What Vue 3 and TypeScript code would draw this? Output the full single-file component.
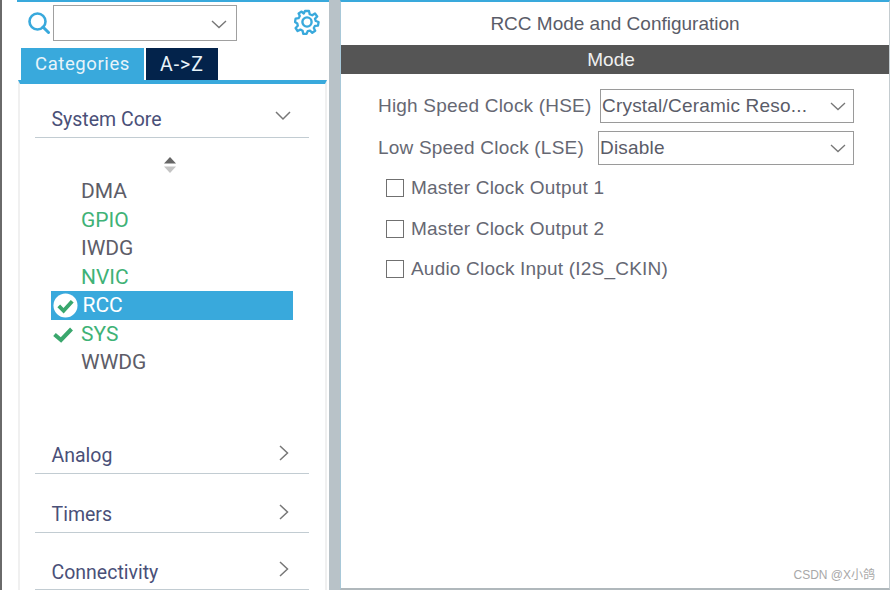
<script setup lang="ts">
const items = [
  { name: 'DMA', state: '' },
  { name: 'GPIO', state: 'green' },
  { name: 'IWDG', state: '' },
  { name: 'NVIC', state: 'green' },
  { name: 'RCC', state: 'selected' },
  { name: 'SYS', state: 'checked' },
  { name: 'WWDG', state: '' },
]
const closedGroups = [
  { name: 'Analog', cls: 'analog' },
  { name: 'Timers', cls: 'timers' },
  { name: 'Connectivity', cls: 'connectivity' },
]
const checks = ['Master Clock Output 1', 'Master Clock Output 2', 'Audio Clock Input (I2S_CKIN)']
</script>

<template>
  <div class="app">
    <div class="edge"></div>
    <aside class="side">
      <div class="search-row">
        <svg class="search-icon" width="22" height="22" viewBox="0 0 22 22" fill="none" stroke="#39a9dc">
          <circle cx="9.5" cy="9.5" r="8" stroke-width="2.6" />
          <path d="M15 15 L20.5 20.5" stroke-width="3" stroke-linecap="round" />
        </svg>
        <div class="combo">
          <svg width="16" height="9" viewBox="0 0 16 9" fill="none" stroke="#777" stroke-width="1.4"><path d="M1 1 L8 7.5 L15 1" /></svg>
        </div>
        <svg class="gear" width="26" height="26" viewBox="0 0 26 26" fill="none" stroke="#39a9dc" stroke-width="2.3" stroke-linejoin="round">
          <path d="M11 2 H15 L15.7 5.2 L18.2 6.3 L21 4.5 L23.2 7.4 L21 9.8 L21.8 12 L24.6 13 L24 16.6 L21 16.8 L19.8 19 L21.2 21.8 L18.3 23.8 L16 21.7 L13.7 22.2 L12.6 24.8 H9.2 L8.6 21.8 L6.4 20.6 L3.6 22 L1.6 19 L3.8 16.8 L3.3 14.4 L1 13 L1.6 9.6 L4.6 9.2 L5.8 7 L4.6 4.4 L7.6 2.6 L9.8 4.6 Z" />
          <circle cx="13" cy="13" r="4.6" stroke-width="2.4" />
        </svg>
      </div>
      <div class="tabs">
        <div class="tab active">Categories</div>
        <div class="tab dark">A-&gt;Z</div>
      </div>
      <div class="panel">
        <div class="group open">
          <span>System Core</span>
          <svg width="16" height="10" viewBox="0 0 16 10" fill="none" stroke="#777" stroke-width="1.5"><path d="M1 1 L8 8 L15 1" /></svg>
        </div>
        <div class="sorter">
          <svg width="14" height="17" viewBox="0 0 14 17">
            <path d="M7 0 L13 6.5 H1 Z" fill="#666" />
            <path d="M7 16 L13 9.5 H1 Z" fill="#c4c4c4" />
          </svg>
        </div>
        <ul class="items">
          <li v-for="item in items" :key="item.name" class="item" :class="item.state">
            <svg v-if="item.state === 'selected'" class="badge" width="25" height="25" viewBox="0 0 26 26">
              <circle cx="13" cy="13" r="12.5" fill="#fff" />
              <path d="M6 13.5 L11 18.5 L20 8.5" fill="none" stroke="#3aa76d" stroke-width="4" />
            </svg>
            <svg v-if="item.state === 'checked'" class="tick" width="20" height="17" viewBox="0 0 20 16">
              <path d="M1.5 8 L8 13.5 L18.5 2.5" fill="none" stroke="#3aa76d" stroke-width="4" />
            </svg>
            <span>{{ item.name }}</span>
          </li>
        </ul>
        <div v-for="g in closedGroups" :key="g.name" class="group closed" :class="g.cls">
          <span>{{ g.name }}</span>
          <svg width="10" height="16" viewBox="0 0 10 16" fill="none" stroke="#777" stroke-width="1.5"><path d="M1 1 L8.5 8 L1 15" /></svg>
        </div>
      </div>
    </aside>
    <div class="gutter"></div>
    <main class="main">
      <h1 class="title">RCC Mode and Configuration</h1>
      <div class="bar">Mode</div>
      <div class="form">
        <div class="field hse">
          <label>High Speed Clock (HSE)</label>
          <div class="select">
            <span>Crystal/Ceramic Reso...</span>
            <svg width="16" height="9" viewBox="0 0 16 9" fill="none" stroke="#777" stroke-width="1.3"><path d="M1 1 L8 7.5 L15 1" /></svg>
          </div>
        </div>
        <div class="field lse">
          <label>Low Speed Clock (LSE)</label>
          <div class="select">
            <span>Disable</span>
            <svg width="16" height="9" viewBox="0 0 16 9" fill="none" stroke="#777" stroke-width="1.3"><path d="M1 1 L8 7.5 L15 1" /></svg>
          </div>
        </div>
        <div class="checks">
          <div v-for="c in checks" :key="c" class="check">
            <span class="box"></span>
            <span>{{ c }}</span>
          </div>
        </div>
      </div>
      <div class="mark">CSDN @X小鸽</div>
    </main>
  </div>
</template>

<style>
html, body { margin: 0; overflow: hidden; background: #fff; }
</style>

<style scoped>
.app {
  width: 890px;
  height: 590px;
  display: flex;
  overflow: hidden;
  background: #fff;
  font-family: Roboto, "Liberation Sans", "Noto Sans CJK SC", sans-serif;
  color: #5c5f6b;
}
.edge {
  width: 2px;
  margin-right: 15px;
  background: #6a6a6a;
  flex: none;
}
.side {
  width: 312px;
  flex: none;
  display: flex;
  flex-direction: column;
  border-top: 2px solid #39a9dc;
  box-sizing: border-box;
}
.search-row {
  height: 44px;
  display: flex;
  align-items: flex-start;
  padding-left: 11px;
  box-sizing: border-box;
}
.search-icon { margin-top: 9.5px; flex: none; }
.combo {
  width: 184px;
  height: 36px;
  margin-left: 3px;
  margin-top: 3px;
  border: 1px solid #a0a0a0;
  box-sizing: border-box;
  display: flex;
  align-items: center;
  justify-content: flex-end;
  padding-right: 9px;
  flex: none;
}
.combo svg { margin-top: 3px; }
.gear { margin-left: 57px; margin-top: 7px; flex: none; }
.tabs {
  display: flex;
  gap: 2px;
  height: 32px;
  margin-top: 2px;
  padding-left: 4px;
}
.tab {
  height: 32px;
  line-height: 33px;
  text-align: center;
  color: #e8f4fa;
  font-size: 18.5px;
  letter-spacing: 0.6px;
}
.active { width: 123px; background: #39a9dc; }
.dark { width: 72px; background: #03234b; font-size: 19.5px; letter-spacing: 1px; }
.panel {
  flex: 1;
  width: 309px;
  margin-left: 1px;
  border-top: 4px solid #39a9dc;
  box-sizing: border-box;
  padding: 0 17px 0 15px;
  border-left: 2px solid #f0f0f0;
  border-right: 2px solid #f0f0f0;
  overflow: hidden;
}
.group {
  height: 30px;
  display: flex;
  justify-content: space-between;
  border-bottom: 1px solid #c2ccd2;
  font-size: 19.5px;
  color: #4a5078;
  padding: 0 17px 0 16.5px;
  box-sizing: content-box;
  width: 240.5px;
}
.group span { line-height: 30px; margin-top: -2px; }
.open { margin-top: 23px; }
.open svg { margin-top: 4px; margin-right: 1px; }
.closed svg { margin-top: 2px; margin-right: 3px; }
.analog { margin-top: 66px; }
.timers { margin-top: 28px; }
.connectivity { margin-top: 26px; }
.connectivity span { margin-top: -1px; }
.sorter {
  display: flex;
  justify-content: center;
  margin-top: 19px;
  height: 17px;
  width: 270px;
}
.items {
  list-style: none;
  margin: 3px 0 0 0;
  padding: 0;
}
.item {
  width: 242px;
  height: 28.5px;
  margin-left: 16px;
  box-sizing: border-box;
  padding-left: 30px;
  font-size: 21px;
  line-height: 28.5px;
  color: #5d5d68;
  position: relative;
}
.green, .checked { color: #3fb277; }
.selected { background: #39a9dc; color: #fff; padding-left: 31.5px; }
.badge { position: absolute; left: 1.5px; top: 2px; }
.tick { position: absolute; left: 2px; top: 6px; }
.gutter { width: 11px; background: #b8c2c8; flex: none; }
.main {
  flex: 1;
  position: relative;
  border-top: 2px solid #39a9dc;
  border-left: 1px solid #a8c8d8;
  border-right: 1px solid #c4ccd0;
  border-bottom: 2px solid #b0b8bc;
  box-sizing: border-box;
}
.title {
  margin: 0;
  height: 43px;
  line-height: 44px;
  text-align: center;
  font-size: 19px;
  font-weight: 400;
  color: #5a5c68;
  font-family: "Liberation Sans", sans-serif;
}
.bar {
  height: 29px;
  line-height: 29px;
  background: #555;
  color: #f0f0f0;
  text-align: center;
  font-size: 19px;
  padding-right: 8px;
  font-family: "Liberation Sans", sans-serif;
}
.form {
  font-family: "Liberation Sans", sans-serif;
  font-size: 19px;
  letter-spacing: 0.2px;
  color: #666873;
  padding-top: 15px;
}
.field {
  display: flex;
  justify-content: space-between;
  align-items: center;
  height: 34px;
  margin-bottom: 8px;
  padding-left: 37px;
  padding-right: 35px;
}
.hse .select { width: 254px; }
.lse .select { width: 256px; }
.select {
  height: 34px;
  border: 1.5px solid #9a9a9a;
  box-sizing: border-box;
  display: flex;
  align-items: center;
  justify-content: space-between;
  padding: 0 7px 0 1px;
  flex: none;
  color: #5a5c68;
}
.checks {
  margin-top: 8px;
  padding-left: 45px;
  display: flex;
  flex-direction: column;
  gap: 10.5px;
}
.check {
  height: 30px;
  display: flex;
  align-items: center;
  gap: 7px;
}
.box {
  width: 18px;
  height: 18px;
  border: 1.5px solid #707070;
  box-sizing: border-box;
  flex: none;
}
.mark {
  position: absolute;
  right: 14px;
  bottom: 6px;
  font-size: 12px;
  color: #a8a8a8;
  font-family: "Liberation Sans", "Noto Sans CJK SC", sans-serif;
}
</style>
